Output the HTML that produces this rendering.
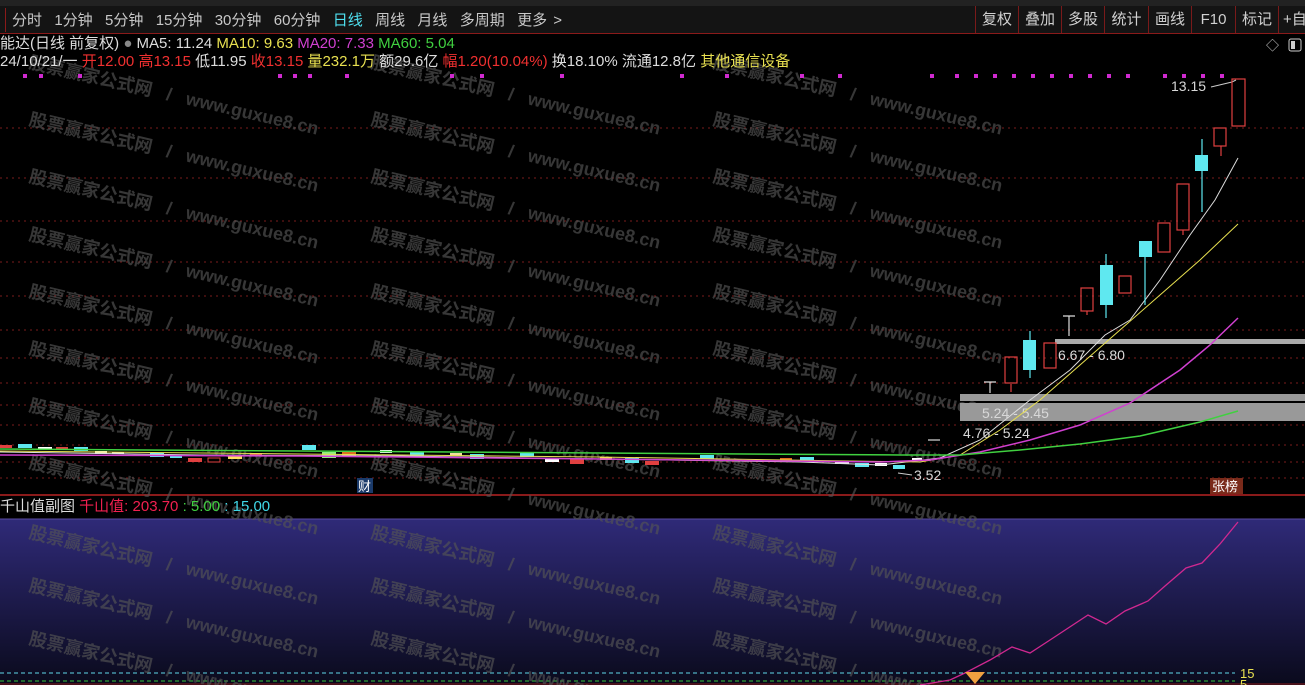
<!DOCTYPE html>
<html><head><meta charset="utf-8"><style>
body{margin:0;background:#000;width:1305px;height:685px;overflow:hidden;position:relative;font-family:"Liberation Sans","Noto Sans CJK SC",sans-serif;}
.top{position:absolute;left:0;top:0;width:1305px;height:33px;background:#141414;border-bottom:1px solid #8a1a1a;}
.top .strip{position:absolute;left:0;top:0;width:1305px;height:6px;background:#222;}
.m{position:absolute;top:9px;font-size:15px;color:#c8c8c8;white-space:nowrap;word-spacing:2px;}
.r{position:absolute;top:6px;height:27px;border-left:1px solid #7a1a1a;font-size:15px;color:#d0d0d0;line-height:27px;text-align:center;}
.t{position:absolute;font-size:15px;white-space:nowrap;line-height:17px;}
svg{position:absolute;left:0;top:0;overflow:hidden;}
</style></head><body>
<div class="top"><div class="strip"></div></div>
<div style="position:absolute;left:5px;top:8px;width:1px;height:24px;background:#8a1a1a"></div>
<div class="m" style="left:12px">分时&nbsp;&nbsp;1分钟&nbsp;&nbsp;5分钟&nbsp;&nbsp;15分钟&nbsp;&nbsp;30分钟&nbsp;&nbsp;60分钟&nbsp;&nbsp;<span style="color:#4fe0f0">日线</span>&nbsp;&nbsp;周线&nbsp;&nbsp;月线&nbsp;&nbsp;多周期&nbsp;&nbsp;更多 &gt;</div>
<div class="r" style="left:975px;width:42px">复权</div>
<div class="r" style="left:1018px;width:42px">叠加</div>
<div class="r" style="left:1061px;width:42px">多股</div>
<div class="r" style="left:1104px;width:43px">统计</div>
<div class="r" style="left:1148px;width:42px">画线</div>
<div class="r" style="left:1191px;width:43px">F10</div>
<div class="r" style="left:1235px;width:42px">标记</div>
<div class="r" style="left:1278px;width:30px;text-align:left;padding-left:4px">+自</div>

<svg width="1305" height="685" viewBox="0 0 1305 685">
<defs><linearGradient id="g" x1="0" y1="0" x2="0" y2="1"><stop offset="0" stop-color="#2f2a78"/><stop offset="1" stop-color="#0a0a1c"/></linearGradient></defs>
<rect x="0" y="519" width="1305" height="166" fill="url(#g)"/>
<g stroke="#7a1c1c" stroke-dasharray="2,4" stroke-width="1">
<line x1="0" y1="128" x2="1305" y2="128"/><line x1="0" y1="178" x2="1305" y2="178"/><line x1="0" y1="221" x2="1305" y2="221"/><line x1="0" y1="262" x2="1305" y2="262"/><line x1="0" y1="296" x2="1305" y2="296"/><line x1="0" y1="330" x2="1305" y2="330"/><line x1="0" y1="358" x2="1305" y2="358"/><line x1="0" y1="383" x2="1305" y2="383"/><line x1="0" y1="405" x2="1305" y2="405"/><line x1="0" y1="425" x2="1305" y2="425"/><line x1="0" y1="445" x2="1305" y2="445"/><line x1="0" y1="462" x2="1305" y2="462"/><line x1="0" y1="478" x2="1305" y2="478"/>
</g>
<line x1="0" y1="495" x2="1305" y2="495" stroke="#8a1a1a" stroke-width="2"/>
<line x1="0" y1="519" x2="1305" y2="519" stroke="#5a4aa0"/>
<line x1="0" y1="673" x2="1235" y2="673" stroke="#5fd8e8" stroke-dasharray="4,3"/>
<line x1="0" y1="681" x2="1235" y2="681" stroke="#3ac040" stroke-dasharray="4,3"/>
<line x1="0" y1="684" x2="1305" y2="684" stroke="#8a1a1a"/>
<!-- watermarks -->
<g font-family="Liberation Sans,Noto Sans CJK SC,sans-serif" font-size="18" font-weight="bold" fill="#555" opacity="0.65">
<g transform="translate(28,68) rotate(13)"><text>股票赢家公式网 <tspan dx="10">/</tspan> <tspan dx="10">www.guxue8.cn</tspan></text></g>
<g transform="translate(370,68) rotate(13)"><text>股票赢家公式网 <tspan dx="10">/</tspan> <tspan dx="10">www.guxue8.cn</tspan></text></g>
<g transform="translate(712,68) rotate(13)"><text>股票赢家公式网 <tspan dx="10">/</tspan> <tspan dx="10">www.guxue8.cn</tspan></text></g>
<g transform="translate(28,125) rotate(13)"><text>股票赢家公式网 <tspan dx="10">/</tspan> <tspan dx="10">www.guxue8.cn</tspan></text></g>
<g transform="translate(370,125) rotate(13)"><text>股票赢家公式网 <tspan dx="10">/</tspan> <tspan dx="10">www.guxue8.cn</tspan></text></g>
<g transform="translate(712,125) rotate(13)"><text>股票赢家公式网 <tspan dx="10">/</tspan> <tspan dx="10">www.guxue8.cn</tspan></text></g>
<g transform="translate(28,182) rotate(13)"><text>股票赢家公式网 <tspan dx="10">/</tspan> <tspan dx="10">www.guxue8.cn</tspan></text></g>
<g transform="translate(370,182) rotate(13)"><text>股票赢家公式网 <tspan dx="10">/</tspan> <tspan dx="10">www.guxue8.cn</tspan></text></g>
<g transform="translate(712,182) rotate(13)"><text>股票赢家公式网 <tspan dx="10">/</tspan> <tspan dx="10">www.guxue8.cn</tspan></text></g>
<g transform="translate(28,240) rotate(13)"><text>股票赢家公式网 <tspan dx="10">/</tspan> <tspan dx="10">www.guxue8.cn</tspan></text></g>
<g transform="translate(370,240) rotate(13)"><text>股票赢家公式网 <tspan dx="10">/</tspan> <tspan dx="10">www.guxue8.cn</tspan></text></g>
<g transform="translate(712,240) rotate(13)"><text>股票赢家公式网 <tspan dx="10">/</tspan> <tspan dx="10">www.guxue8.cn</tspan></text></g>
<g transform="translate(28,297) rotate(13)"><text>股票赢家公式网 <tspan dx="10">/</tspan> <tspan dx="10">www.guxue8.cn</tspan></text></g>
<g transform="translate(370,297) rotate(13)"><text>股票赢家公式网 <tspan dx="10">/</tspan> <tspan dx="10">www.guxue8.cn</tspan></text></g>
<g transform="translate(712,297) rotate(13)"><text>股票赢家公式网 <tspan dx="10">/</tspan> <tspan dx="10">www.guxue8.cn</tspan></text></g>
<g transform="translate(28,354) rotate(13)"><text>股票赢家公式网 <tspan dx="10">/</tspan> <tspan dx="10">www.guxue8.cn</tspan></text></g>
<g transform="translate(370,354) rotate(13)"><text>股票赢家公式网 <tspan dx="10">/</tspan> <tspan dx="10">www.guxue8.cn</tspan></text></g>
<g transform="translate(712,354) rotate(13)"><text>股票赢家公式网 <tspan dx="10">/</tspan> <tspan dx="10">www.guxue8.cn</tspan></text></g>
<g transform="translate(28,411) rotate(13)"><text>股票赢家公式网 <tspan dx="10">/</tspan> <tspan dx="10">www.guxue8.cn</tspan></text></g>
<g transform="translate(370,411) rotate(13)"><text>股票赢家公式网 <tspan dx="10">/</tspan> <tspan dx="10">www.guxue8.cn</tspan></text></g>
<g transform="translate(712,411) rotate(13)"><text>股票赢家公式网 <tspan dx="10">/</tspan> <tspan dx="10">www.guxue8.cn</tspan></text></g>
<g transform="translate(28,468) rotate(13)"><text>股票赢家公式网 <tspan dx="10">/</tspan> <tspan dx="10">www.guxue8.cn</tspan></text></g>
<g transform="translate(370,468) rotate(13)"><text>股票赢家公式网 <tspan dx="10">/</tspan> <tspan dx="10">www.guxue8.cn</tspan></text></g>
<g transform="translate(712,468) rotate(13)"><text>股票赢家公式网 <tspan dx="10">/</tspan> <tspan dx="10">www.guxue8.cn</tspan></text></g>
<g transform="translate(28,538) rotate(13)"><text>股票赢家公式网 <tspan dx="10">/</tspan> <tspan dx="10">www.guxue8.cn</tspan></text></g>
<g transform="translate(370,538) rotate(13)"><text>股票赢家公式网 <tspan dx="10">/</tspan> <tspan dx="10">www.guxue8.cn</tspan></text></g>
<g transform="translate(712,538) rotate(13)"><text>股票赢家公式网 <tspan dx="10">/</tspan> <tspan dx="10">www.guxue8.cn</tspan></text></g>
<g transform="translate(28,591) rotate(13)"><text>股票赢家公式网 <tspan dx="10">/</tspan> <tspan dx="10">www.guxue8.cn</tspan></text></g>
<g transform="translate(370,591) rotate(13)"><text>股票赢家公式网 <tspan dx="10">/</tspan> <tspan dx="10">www.guxue8.cn</tspan></text></g>
<g transform="translate(712,591) rotate(13)"><text>股票赢家公式网 <tspan dx="10">/</tspan> <tspan dx="10">www.guxue8.cn</tspan></text></g>
<g transform="translate(28,644) rotate(13)"><text>股票赢家公式网 <tspan dx="10">/</tspan> <tspan dx="10">www.guxue8.cn</tspan></text></g>
<g transform="translate(370,644) rotate(13)"><text>股票赢家公式网 <tspan dx="10">/</tspan> <tspan dx="10">www.guxue8.cn</tspan></text></g>
<g transform="translate(712,644) rotate(13)"><text>股票赢家公式网 <tspan dx="10">/</tspan> <tspan dx="10">www.guxue8.cn</tspan></text></g>
</g>
<!-- purple dots -->
<g fill="#d02ad0">
<rect x="23" y="74" width="4" height="4"/><rect x="39" y="74" width="4" height="4"/><rect x="78" y="74" width="4" height="4"/><rect x="278" y="74" width="4" height="4"/><rect x="293" y="74" width="4" height="4"/><rect x="308" y="74" width="4" height="4"/><rect x="345" y="74" width="4" height="4"/><rect x="450" y="74" width="4" height="4"/><rect x="480" y="74" width="4" height="4"/><rect x="560" y="74" width="4" height="4"/><rect x="680" y="74" width="4" height="4"/><rect x="725" y="74" width="4" height="4"/><rect x="800" y="74" width="4" height="4"/><rect x="838" y="74" width="4" height="4"/><rect x="930" y="74" width="4" height="4"/><rect x="955" y="74" width="4" height="4"/><rect x="974" y="74" width="4" height="4"/><rect x="993" y="74" width="4" height="4"/><rect x="1012" y="74" width="4" height="4"/><rect x="1031" y="74" width="4" height="4"/><rect x="1050" y="74" width="4" height="4"/><rect x="1069" y="74" width="4" height="4"/><rect x="1088" y="74" width="4" height="4"/><rect x="1107" y="74" width="4" height="4"/><rect x="1126" y="74" width="4" height="4"/><rect x="1163" y="74" width="4" height="4"/><rect x="1182" y="74" width="4" height="4"/><rect x="1201" y="74" width="4" height="4"/><rect x="1220" y="74" width="4" height="4"/>
</g>
<!-- gray bands -->
<rect x="1055" y="339" width="250" height="5" fill="#aaa"/>
<rect x="960" y="394" width="345" height="7" fill="#999"/>
<rect x="960" y="403" width="345" height="18" fill="#999"/>
<g font-family="Liberation Sans,sans-serif" font-size="14" fill="#d8d8d8">
<text x="1058" y="360">6.67 - 6.80</text>
<text x="982" y="418">5.24 - 5.45</text>
<text x="963" y="438">4.76 - 5.24</text>
<text x="1171" y="91">13.15</text>
<text x="914" y="480">3.52</text>
</g>
<path d="M1211 87 L1232 82 L1236 80" stroke="#ccc" fill="none"/>
<path d="M898 473 L912 475" stroke="#ccc"/>
<!-- flat candles -->
<g stroke-width="1">
<rect x="0" y="445" width="12" height="3" fill="#e04040"/><rect x="18" y="444" width="14" height="4" fill="#5fe8f0"/>
<rect x="38" y="447" width="14" height="3" fill="#fff"/><rect x="56" y="447" width="12" height="2" fill="#e04040"/><rect x="74" y="447" width="14" height="4" fill="#5fe8f0"/>
<rect x="95" y="451" width="12" height="3" fill="#fff"/><rect x="112" y="452" width="12" height="2" fill="#fff"/><rect x="150" y="453" width="14" height="4" fill="#5fe8f0"/>
<rect x="170" y="456" width="12" height="2" fill="#5fe8f0"/><rect x="188" y="458" width="14" height="4" fill="#e04040"/><rect x="208" y="458" width="12" height="4" fill="none" stroke="#e04040"/>
<rect x="228" y="455" width="14" height="4" fill="#ffe060"/><rect x="250" y="453" width="12" height="3" fill="#e04040"/><rect x="302" y="445" width="14" height="5" fill="#5fe8f0"/>
<rect x="322" y="452" width="14" height="6" fill="#90f080"/><rect x="342" y="452" width="14" height="5" fill="#e07020"/><rect x="380" y="450" width="12" height="3" fill="#fff"/>
<rect x="410" y="452" width="14" height="4" fill="#5fe8f0"/><rect x="450" y="453" width="12" height="3" fill="#f0e0a0"/><rect x="470" y="454" width="14" height="5" fill="#5fe8f0"/>
<rect x="520" y="453" width="14" height="4" fill="#5fe8f0"/><rect x="545" y="458" width="14" height="4" fill="#fff"/><rect x="570" y="459" width="14" height="5" fill="#e04040"/>
<rect x="600" y="457" width="12" height="3" fill="#ffe060"/><rect x="625" y="458" width="14" height="5" fill="#5fe8f0"/><rect x="645" y="461" width="14" height="4" fill="#e04040"/>
<rect x="700" y="455" width="14" height="4" fill="#5fe8f0"/><rect x="780" y="458" width="12" height="3" fill="#e07020"/><rect x="800" y="457" width="14" height="4" fill="#5fe8f0"/>
<rect x="835" y="461" width="14" height="3" fill="#fff"/><rect x="855" y="463" width="14" height="4" fill="#5fe8f0"/><rect x="875" y="463" width="12" height="3" fill="#fff"/>
<rect x="893" y="465" width="12" height="4" fill="#5fe8f0"/><rect x="912" y="458" width="10" height="3" fill="#fff"/>
</g>
<!-- MA lines -->
<path d="M0 452 L200 455 L400 456 L600 459 L800 462 L880 465 L940 458 L980 440 L1030 400 L1070 370 L1105 335 L1130 320 L1160 280 L1190 235 L1215 200 L1238 158" stroke="#ddd" fill="none"/>
<path d="M0 451 L300 454 L600 457 L850 461 L920 462 L960 455 L1000 430 L1040 400 L1080 365 L1120 330 L1160 295 L1200 260 L1238 224" stroke="#e8e050" fill="none"/>
<path d="M0 455 L300 456 L600 459 L880 462 L930 460 L980 452 L1030 440 L1080 425 L1130 403 L1180 370 L1210 345 L1238 318" stroke="#d040d0" fill="none" stroke-width="1.5"/>
<path d="M0 449 L300 451 L600 453 L900 455 L960 455 L1020 450 L1080 444 L1140 436 L1200 422 L1238 411" stroke="#40d040" fill="none" stroke-width="1.5"/>
<!-- rising candles -->
<g stroke-width="1.2">
<path d="M984 382 H996 M990 382 V393" stroke="#ddd"/>
<path d="M928 440 H940" stroke="#ddd"/>
<line x1="1011" y1="384" x2="1011" y2="392" stroke="#e04040"/><rect x="1005" y="357" width="12" height="26" fill="none" stroke="#e04040"/>
<line x1="1030" y1="331" x2="1030" y2="378" stroke="#5fe8f0"/><rect x="1023" y="340" width="13" height="30" fill="#5fe8f0"/>
<rect x="1044" y="343" width="12" height="25" fill="none" stroke="#e04040"/>
<path d="M1063 316 H1075 M1069 316 V336" stroke="#ddd"/>
<line x1="1087" y1="311" x2="1087" y2="315" stroke="#e04040"/><rect x="1081" y="288" width="12" height="23" fill="none" stroke="#e04040"/>
<line x1="1106" y1="254" x2="1106" y2="318" stroke="#5fe8f0"/><rect x="1100" y="265" width="13" height="40" fill="#5fe8f0"/>
<rect x="1119" y="276" width="12" height="17" fill="none" stroke="#e04040"/>
<line x1="1145" y1="256" x2="1145" y2="305" stroke="#5fe8f0"/><rect x="1139" y="241" width="13" height="16" fill="#5fe8f0"/>
<rect x="1158" y="223" width="12" height="29" fill="none" stroke="#e04040"/>
<line x1="1183" y1="230" x2="1183" y2="235" stroke="#e04040"/><rect x="1177" y="184" width="12" height="46" fill="none" stroke="#e04040"/>
<line x1="1202" y1="139" x2="1202" y2="212" stroke="#5fe8f0"/><rect x="1195" y="155" width="13" height="16" fill="#5fe8f0"/>
<line x1="1221" y1="146" x2="1221" y2="156" stroke="#e04040"/><rect x="1214" y="128" width="12" height="18" fill="none" stroke="#e04040"/>
<rect x="1232" y="79" width="13" height="47" fill="none" stroke="#e04040"/>
</g>
<!-- sub chart line -->
<path d="M920 685 L950 680 L965 673 L990 660 L1012 647 L1030 653 L1050 640 L1088 615 L1106 624 L1125 611 L1148 601 L1165 586 L1186 568 L1202 563 L1220 544 L1238 522" stroke="#d02890" fill="none" stroke-width="1.3"/>
<path d="M965 672 L985 672 L975 684 Z" fill="#f0a040"/>
<g font-family="Liberation Sans,sans-serif" font-size="13" fill="#e8e050"><text x="1240" y="678">15</text><text x="1240" y="689">5</text></g>
<!-- labels -->
<rect x="357" y="478" width="16" height="15" fill="#1a3a6a"/>
<text x="358" y="491" font-size="13" fill="#fff" font-family="Noto Sans CJK SC,sans-serif">财</text>
<rect x="1210" y="478" width="33" height="16" fill="#7a2a1a"/>
<text x="1212" y="491" font-size="13" fill="#fff" font-family="Noto Sans CJK SC,sans-serif">张榜</text>
<text x="1266" y="50" font-size="13" fill="#ccc">◇</text>
<rect x="1289" y="39" width="12" height="12" rx="2" fill="none" stroke="#ccc"/><rect x="1291" y="41" width="4" height="8" fill="#ccc"/>
</svg>

<div class="t" style="left:0;top:35px;color:#ddd">能达(日线 前复权) <span style="color:#888">●</span> MA5: 11.24 <span style="color:#e8e050">MA10: 9.63</span> <span style="color:#d040d0">MA20: 7.33</span> <span style="color:#40d040">MA60: 5.04</span></div>
<div class="t" style="left:0;top:53px;color:#ddd">24/10/21/一 <span style="color:#f03030">开12.00 高13.15</span> 低11.95 <span style="color:#f03030">收13.15</span> <span style="color:#e8e050">量232.1万</span> 额29.6亿 <span style="color:#f03030">幅1.20(10.04%)</span> 换18.10% 流通12.8亿 <span style="color:#e8e050">其他通信设备</span></div>
<div class="t" style="left:0;top:498px;color:#ddd;font-size:15px">千山值副图 <span style="color:#f02050">千山值: 203.70</span> <span style="color:#40d040">: 5.00</span> <span style="color:#40d8e8">: 15.00</span></div>
</body></html>
